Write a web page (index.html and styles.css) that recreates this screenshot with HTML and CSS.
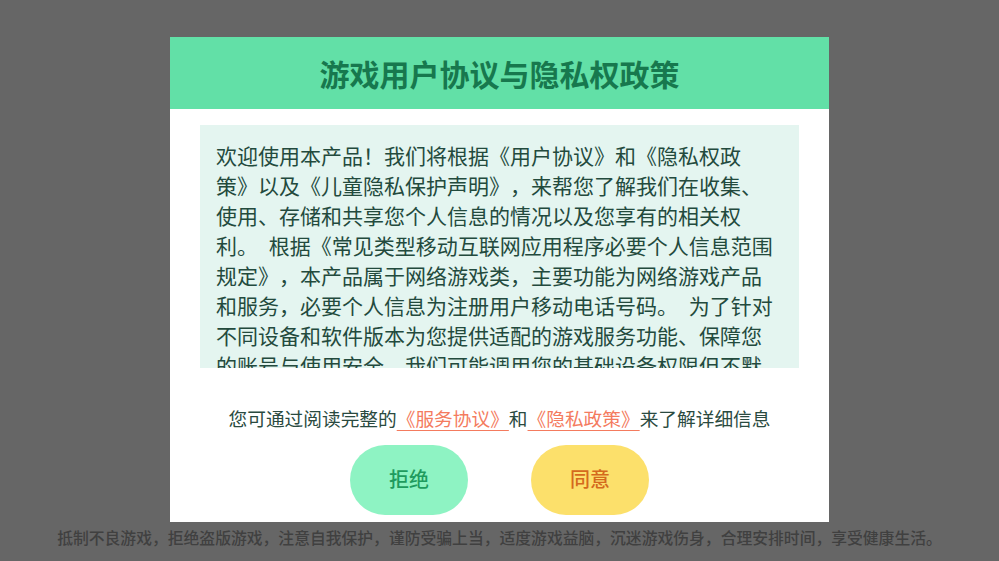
FILE: index.html
```html
<!DOCTYPE html>
<html lang="zh-CN">
<head>
<meta charset="utf-8">
<title>游戏用户协议与隐私权政策</title>
<link rel="stylesheet" href="styles.css">
</head>
<body>
<div class="modal">
  <div class="modal-header">游戏用户协议与隐私权政策</div>
  <div class="modal-body">
    <div class="content-box">
      <p class="content">欢迎使用本产品！我们将根据《用户协议》和《隐私权政<br>策》以及《儿童隐私保护声明》，来帮您了解我们在收集、<br>使用、存储和共享您个人信息的情况以及您享有的相关权<br>利。 根据《常见类型移动互联网应用程序必要个人信息范围<br>规定》，本产品属于网络游戏类，主要功能为网络游戏产品<br>和服务，必要个人信息为注册用户移动电话号码。 为了针对<br>不同设备和软件版本为您提供适配的游戏服务功能、保障您<br>的账号与使用安全，我们可能调用您的基础设备权限但不默<br>认开启，您可以在设备设置中随时关闭相关权限。</p>
    </div>
    <p class="notice">您可通过阅读完整的<a class="link" href="#">《服务协议》</a>和<a class="link" href="#">《隐私政策》</a>来了解详细信息</p>
    <div class="actions">
      <button class="btn btn-refuse">拒绝</button>
      <button class="btn btn-agree">同意</button>
    </div>
  </div>
</div>
<p class="footer">抵制不良游戏，拒绝盗版游戏，注意自我保护，谨防受骗上当，适度游戏益脑，沉迷游戏伤身，合理安排时间，享受健康生活。</p>
</body>
</html>
```
FILE: styles.css
```css
html, body {
  margin: 0;
  padding: 0;
}
body {
  background: #666666;
  font-family: "Noto Sans CJK SC", "Noto Sans", sans-serif;
  padding-top: 37px;
  height: 561px;
  box-sizing: border-box;
  overflow: hidden;
  text-spacing-trim: space-all;
}
.modal {
  width: 659px;
  height: 485px;
  margin: 0 auto;
  background: #ffffff;
  display: flex;
  flex-direction: column;
}
.modal-header {
  height: 72px;
  background: #62e0a7;
  color: #17784e;
  font-size: 30px;
  font-weight: 700;
  display: flex;
  align-items: center;
  justify-content: center;
}
.modal-body {
  padding: 16px 30px 0;
  display: flex;
  flex-direction: column;
}
.content-box {
  height: 243px;
  background: #e4f5f0;
  overflow: hidden;
  padding: 15px 16px 0;
  box-sizing: border-box;
}
.content {
  margin: 0;
  font-size: 21px;
  line-height: 30px;
  color: #234a3d;
  white-space: nowrap;
  word-spacing: 6px;
}
.notice {
  margin: 0;
  margin-top: 37px;
  text-align: center;
  font-size: 18.7px;
  line-height: 26px;
  color: #2a4a40;
}
.link {
  color: #f47b5e;
  text-decoration: underline;
  text-underline-offset: 4px;
  text-decoration-thickness: 1px;
}
.actions {
  margin-top: 14px;
  display: flex;
  justify-content: center;
  gap: 63px;
}
.btn {
  width: 118px;
  height: 70px;
  border: none;
  border-radius: 35px;
  font-family: "Noto Sans CJK SC", "Noto Sans", sans-serif;
  font-size: 20px;
  font-weight: 500;
  padding: 0 0 3px;
  cursor: pointer;
}
.btn-refuse {
  background: #8ef3c3;
  color: #1e9b5e;
}
.btn-agree {
  background: #fce06b;
  color: #d4691d;
}
.footer {
  margin: 7px 0 0;
  text-align: center;
  font-size: 15.8px;
  line-height: 18px;
  color: #404040;
  font-weight: 500;
}
```
